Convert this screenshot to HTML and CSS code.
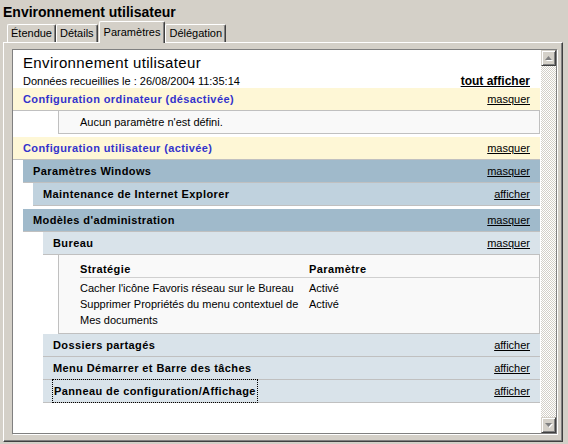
FILE: index.html
```html
<!DOCTYPE html>
<html lang="fr">
<head>
<meta charset="utf-8">
<title>Environnement utilisateur</title>
<link rel="stylesheet" href="styles.css">
</head>
<body>
<div class="title">Environnement utilisateur</div>
<div class="tabs">
  <div class="tab">Étendue</div>
  <div class="tab">Détails</div>
  <div class="tab active">Paramètres</div>
  <div class="tab">Délégation</div>
</div>
<div class="panel">
  <div class="viewer">
    <div class="report">
      <div class="report-head">
        <div class="report-title">Environnement utilisateur</div>
        <div class="report-meta"><span>Données recueillies le : 26/08/2004 11:35:14</span><a class="show-all">tout afficher</a></div>
      </div>
      <div class="he he0"><span class="label">Configuration ordinateur (désactivée)</span><a>masquer</a></div>
      <div class="box empty">Aucun paramètre n'est défini.</div>
      <div class="he he0 gap"><span class="label">Configuration utilisateur (activée)</span><a>masquer</a></div>
      <div class="he he1"><span class="label">Paramètres Windows</span><a>masquer</a></div>
      <div class="he he2"><span class="label">Maintenance de Internet Explorer</span><a>afficher</a></div>
      <div class="he he1 gap"><span class="label">Modèles d'administration</span><a>masquer</a></div>
      <div class="he he3"><span class="label">Bureau</span><a>masquer</a></div>
      <div class="box settings">
        <table class="policy">
          <thead><tr><th class="col-policy">Stratégie</th><th>Paramètre</th></tr></thead>
          <tbody>
            <tr><td>Cacher l'icône Favoris réseau sur le Bureau</td><td>Activé</td></tr>
            <tr><td>Supprimer Propriétés du menu contextuel de Mes documents</td><td>Activé</td></tr>
          </tbody>
        </table>
      </div>
      <div class="he he3"><span class="label">Dossiers partagés</span><a>afficher</a></div>
      <div class="he he3"><span class="label">Menu Démarrer et Barre des tâches</span><a>afficher</a></div>
      <div class="he he3"><span class="label focus">Panneau de configuration/Affichage</span><a>afficher</a></div>
    </div>
    <div class="scrollbar">
      <div class="sb-btn"><svg width="8" height="5" viewBox="0 0 8 5"><polygon points="4.5,1 8,5 1,5" fill="#fff"/><polygon points="3.5,0 7,4 0,4" fill="#808080"/></svg></div>
      <div class="sb-track"></div>
      <div class="sb-btn"><svg width="8" height="5" viewBox="0 0 8 5"><polygon points="1,1 8,1 4.5,5" fill="#fff"/><polygon points="0,0 7,0 3.5,4" fill="#808080"/></svg></div>
    </div>
  </div>
</div>
</body>
</html>
```
FILE: styles.css
```css
* { box-sizing: border-box; }
html, body { margin: 0; padding: 0; }
body {
  width: 568px;
  height: 444px;
  overflow: hidden;
  background: #d4d0c8;
  font-family: "Liberation Sans", Arial, sans-serif;
  font-size: 11px;
  color: #000;
}
.title {
  height: 21px;
  padding: 4px 3px 1px;
  font-size: 14px;
  font-weight: bold;
  line-height: 16px;
}
.tabs {
  display: flex;
  align-items: flex-end;
  height: 21px;
  padding-left: 7px;
}
.tab {
  height: 18px;
  line-height: 17px;
  padding: 0 3px;
  background: #d4d0c8;
  border-top: 1px solid #fff;
  border-left: 1px solid #fff;
  border-right: 1px solid #404040;
  box-shadow: inset -1px 0 0 #808080;
  border-radius: 2px 2px 0 0;
}
.tab.active {
  position: relative;
  z-index: 1;
  height: 22px;
  padding: 2px 4px 0;
  margin: 0 0 -1px 1px;
}
.panel {
  height: 400px;
  margin: 0 5px 0 3px;
  padding: 6px 5px 7px 8px;
  border-top: 1px solid #fff;
  border-left: 1px solid #fff;
  border-right: 1px solid #404040;
  border-bottom: 1px solid #404040;
  box-shadow: inset -1px -1px 0 #808080;
}
.viewer {
  display: flex;
  height: 385px;
  background: #fff;
  border: 1px solid #808080;
  box-shadow: 1px 1px 0 #fff;
}
.report {
  flex: 1;
  overflow: hidden;
  padding: 4px 1px 0 0;
}
.report-head { padding: 0 10px; }
.report-title {
  font-size: 15px;
  line-height: 18px;
  letter-spacing: 0.35px;
}
.report-meta {
  display: flex;
  justify-content: space-between;
  align-items: baseline;
  margin-top: 2px;
  line-height: 14px;
  height: 14px;
}
.show-all {
  font-size: 12px;
  font-weight: bold;
  text-decoration: underline;
}
.he {
  display: flex;
  justify-content: space-between;
  height: 23px;
  line-height: 22px;
  padding: 0 10px;
  border-bottom: 1px solid #c0c0c0;
  font-weight: bold;
}
.he .label { letter-spacing: 0.4px; }
.he a {
  font-weight: normal;
  color: #000;
  text-decoration: underline;
}
.he0 { background: #fef7d6; color: #3333cc; }
.he1 { margin-left: 10px; background: #a0bacb; }
.he2 { margin-left: 20px; background: #c0d2de; }
.he3 { margin-left: 30px; background: #d9e3ea; }
.gap { margin-top: 3px; }
.focus { outline: 1px dotted #000; padding: 0 1px; }
.box {
  margin-left: 45px;
  background: #f9f9f9;
  border: 1px solid #c0c0c0;
  border-top: 0;
}
.empty {
  height: 23px;
  line-height: 22px;
  padding-left: 21px;
}
.settings { padding: 6px 0 5px 21px; }
.policy {
  width: 100%;
  border-collapse: collapse;
  table-layout: fixed;
}
.policy th {
  text-align: left;
  font-weight: bold;
  letter-spacing: 0.4px;
  line-height: 16px;
  padding: 0;
  border-bottom: 1px solid #d0d0d0;
}
.policy .col-policy { width: 229px; }
.policy td {
  padding: 0;
  line-height: 16px;
  vertical-align: top;
}
.policy tbody tr:first-child td { padding-top: 2px; }
.scrollbar {
  display: flex;
  flex-direction: column;
  width: 15px;
}
.sb-btn {
  display: flex;
  align-items: center;
  justify-content: center;
  height: 16px;
  background: #d4d0c8;
  border-top: 1px solid #d4d0c8;
  border-left: 1px solid #d4d0c8;
  border-right: 1px solid #404040;
  border-bottom: 1px solid #404040;
  box-shadow: inset 1px 1px 0 #fff, inset -1px -1px 0 #808080;
}
.sb-track {
  flex: 1;
  background: repeating-conic-gradient(#d4d0c8 0 25%, #fff 0 50%) 0 0 / 2px 2px;
}
```
